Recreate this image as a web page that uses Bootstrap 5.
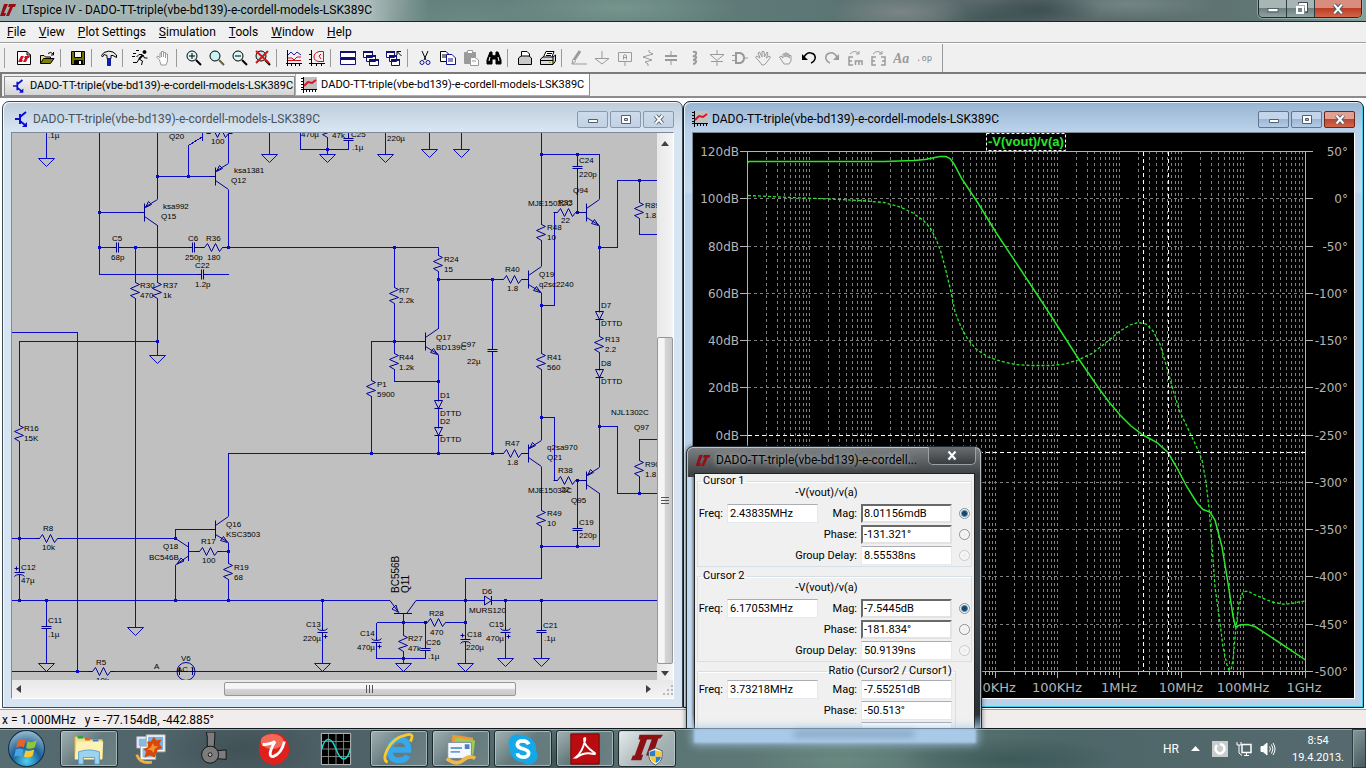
<!DOCTYPE html>
<html lang="en">
<head>
<meta charset="utf-8">
<meta name="viewport" content="width=device-width, initial-scale=1">
<title>LTspice IV - DADO-TT-triple(vbe-bd139)-e-cordell-models-LSK389C</title>
<link href="https://cdn.jsdelivr.net/npm/bootstrap@5.3.0/dist/css/bootstrap.min.css" rel="stylesheet">
<style>
  body { font: 12px/16px Roboto, "Open Sans", sans-serif; color: #000; background: #f0f0f0; }
  button { font: inherit; padding: 0; border: 0; background: none; color: inherit; }
  .fill { min-height: 0; }
  .aero { background:
      radial-gradient(ellipse 60px 20px at 1040px 10px, #2f4547aa, transparent),
      radial-gradient(ellipse 90px 16px at 1130px 4px, #7d9290aa, transparent),
      radial-gradient(ellipse 70px 20px at 900px 12px, #8b8f90aa, transparent),
      radial-gradient(ellipse 120px 24px at 620px 8px, #7fa095aa, transparent),
      radial-gradient(ellipse 90px 24px at 470px 20px, #6d8d88aa, transparent),
      radial-gradient(ellipse 60px 20px at 990px 18px, #37504faa, transparent),
      linear-gradient(90deg, #9dafb0, #a9bab8 370px, #64807c 430px, #64807c 45%, #5b7674 60%, #5c6669 75%, #5f7673 92%, #7fa19b); }
  .app-title { height: 22px; border-bottom: 1px solid #17262a; }
  .app-title h1 { font-size: 12px; line-height: 20px; padding: 0 12px 0 6px; text-shadow: 0 0 6px #c8d4d3; }
  .sysbtns { height: 18px; width: 104px; border: 1px solid #1d2c2f; border-top: 0; border-radius: 0 0 5px 5px; overflow: hidden; box-shadow: 0 0 0 1px #b9c9c788; }
  .sysbtns button { flex: 28; height: 100%; background: linear-gradient(#a7b5b4 45%, #6d807f 50%, #8fa3a1); border-right: 1px solid #2d3d40; }
  .sysbtns .shut { flex: 47; background: linear-gradient(#d98d7f 45%, #bc3c24 50%, #d4654a); border: 0; }
  .menu-row { height: 21px; border-bottom: 1px solid #a0a0a0; padding-left: 7px; gap: 13px; }
  .menu-row a { color: #000; text-decoration: none; }
  .tools { height: 31px; border-bottom: 2px solid #7a7a7a; border-top: 1px solid #fff; }
  .grip { width: 3px; height: 20px; margin: 0 7px 0 2px; border-right: 1px solid #a0a0a0; }
  .tgroup { border-right: 1px solid #9a9a9a; padding-right: 2px; margin-right: 5px; height: 18px; }
  .tgroup.fin { height: 28px; padding-right: 7px; }
  .tgroup button { width: 23px; height: 20px; display: flex; align-items: center; justify-content: center; }
  .tgroup svg { width: 16px; height: 16px; fill: none; stroke: #000; }
  .tgroup button:disabled svg { stroke: #9a9a9a; color: #9a9a9a; }
  .doc-tabs { height: 24px; padding-left: 2px; border-left: 2px solid #7a7a7a; border-bottom: 2px solid #8c8c8c; }
  .doc-tabs button { font-size: 11px; white-space: nowrap; border: 1px solid #8c8c8c; height: 20px; padding: 0 1px 0 8px; gap: 5px; background: linear-gradient(#f4f4f4, #d4d4d4); }
  .doc-tabs button.active { height: 22px; background: #fff; border-color: #b0b0b0; border-right-color: #8c8c8c; border-top: 0; padding: 0 5px; gap: 4px; }
  .mdi { background: #fff; padding: 3px 2px 1px; }
  .child { border: 1px solid #3c4a55; border-radius: 7px 7px 0 0; padding: 0 8px 8px; background: linear-gradient(#bfcddb, #d7e4f2 28px); color: #47535e; flex: 1 1 0; min-width: 0; box-shadow: inset 1px 1px 0 #f3f8fd; }
  .child.front { background: linear-gradient(#99b4d1, #b9d1ea 28px, #c5d9ee 90px, #b9d1ea 92px); color: #000; border-color: #101a22; box-shadow: inset 1px 1px 0 #e8f2fb, inset -1px -1px 0 #3bd0ea; }
  .child-title { height: 30px; padding-top: 4px; }
  .child-title h2 { font-size: 12px; line-height: 16px; margin: 0 auto 0 4px; }
  .winbtn { width: 31px; height: 17px; border: 1px solid #8a9aad; border-radius: 2px; margin-left: 2px; background: linear-gradient(#cddbea, #c2d2e4); }
  .front .winbtn { background: linear-gradient(#c3d5ea 45%, #9cb7d6 50%, #b4cbe5); border-color: #5f7690; }
  .front .winbtn.shut { background: linear-gradient(#e0a193 45%, #be4630 50%, #d1674c); border-color: #6b2418; }
  .client { border: 1px solid #7e8a95; border-right-color: #fff; border-bottom-color: #fff; min-height: 0; }
  .sheet { background: #c0c0c0; min-width: 0; min-height: 0; }
  .sheet svg, .plot svg { display: block; width: 100%; height: 100%; }
  .plot { background: #000; }
  .vbar { width: 16px; background: linear-gradient(90deg, #e8e8e8, #f4f4f4); color: #404040; }
  .hbar { height: 18px; background: linear-gradient(#e8e8e8, #f4f4f4); color: #404040; }
  .thumb { border: 1px solid #979797; border-radius: 2px; }
  .vbar .thumb { flex: 319; background: linear-gradient(90deg, #f5f5f5 45%, #d6d6d6 50%, #c9c9c9); }
  .vbar .lead-in { flex: 188; }
  .vbar .lead-out { flex: 7; }
  .hbar .thumb { flex: 291; background: linear-gradient(#f5f5f5 45%, #d6d6d6 50%, #c9c9c9); }
  .hbar .lead-in { flex: 204; }
  .hbar .lead-out { flex: 131; }
  .status { height: 19px; background: #f1eded; border-top: 1px solid #a5a0a0; padding-left: 2px; line-height: 20px; gap: 9px; }

  .sch { stroke: #0a0ac8; fill: none; shape-rendering: crispEdges; }
  .sch .dot { fill: #0a0ac8; stroke: none; }
  .parts { stroke: #000096; fill: none; }
  .lbl { font: 8px "Liberation Sans", Arial, sans-serif; fill: #000; }
  .lbl .big { font-size: 10px; }
  .axis { font: 12px "DejaVu Sans", sans-serif; fill: #b4b4b4; }
  .axis .hz { font-size: 13px; text-anchor: middle; }
  .axis .rt { text-anchor: end; }
  .gridln { stroke: #808080; stroke-dasharray: 3 3; fill: none; shape-rendering: crispEdges; }

  .readout { position: absolute; left: 686px; top: 446px; width: 296px; height: 320px; border: 1px solid #1e2a30; border-radius: 7px 7px 0 0; padding: 0 6px 0 7px; background: linear-gradient(90deg, #c5d9ee 4px, transparent 9px) 0 30px no-repeat, linear-gradient(#7e8284, #3c3f41 28px, #3e454b 45%, #2a3036 84%, #9cc4e8 90%); box-shadow: inset 0 0 0 1px #c9d6dfcc, 0 0 5px #0008; }
  .readout header { height: 26px; padding-left: 1px; }
  .readout h2 { font-size: 12px; line-height: 26px; margin: 0 0 0 5px; text-shadow: 0 0 5px #b4b8ba, 0 0 8px #b4b8ba; white-space: nowrap; }
  .readout .shutbtn { position: absolute; right: 5px; top: 0; width: 48px; height: 18px; border: 1px solid #9aa0a4; border-top: 0; border-radius: 0 0 5px 5px; background: linear-gradient(#6a6e70, #3a3d3f); }
  .pane { background: #f0f0f0; border: 1px solid #222; height: 300px; padding: 1px 2px 0; font-size: 11px; line-height: 12px; }
  .pane fieldset { border: 1px solid #d5dfe5; box-shadow: inset 0 1px 0 #fff; height: 92px; margin-bottom: 3px; padding: 0; }
  .pane legend { float: none; width: auto; font-size: 11px; line-height: 12px; margin: 0 0 0 3px; padding: 0 2px; white-space: nowrap; }
  .pane .trace { text-align: center; padding-right: 16px; height: 16px; line-height: 11px; margin: 0 0 1px; }
  .pane .quotient { margin-right: 16px; height: 110px; }
  .pane .quotient legend { margin: 0 0 3px 50%; }
  .duo { display: grid; grid-template-columns: 25px 91px 35px 91px 16px; column-gap: 4px; row-gap: 2px; align-items: center; }
  .duo label { text-align: right; white-space: nowrap; }
  .duo .wide { grid-column: 1 / 4; }
  .duo input[type=text] { width: 100%; height: 19px; border: 1px solid #e3e9ef; border-top-color: #abadb3; padding: 0 2px; font: inherit; background: #fff; color: #000; }
  .duo input.sunk { border: 2px solid #e3e3e3; border-top-color: #696969; border-left-color: #696969; padding: 0 1px; }
  .duo input[type=radio] { appearance: none; width: 11px; height: 11px; margin: 0 0 0 3px; border: 1px solid #8e8f8f; border-radius: 50%; background: radial-gradient(#e8ecef, #fff); }
  .duo input[type=radio]:checked { background: radial-gradient(#16476f 0 2px, #4a8fc0 3px, #f4f4f4 4px); }
  .duo input[type=radio]:disabled { border-color: #c8c8c8; }

  .taskbar { height: 40px; border-top: 1px solid #101a1e; box-shadow: inset 0 1px 0 #93aaab; z-index: 2; color: #fff; background:
      radial-gradient(ellipse 110px 22px at 1010px 30px, #33504faa, transparent),
      radial-gradient(ellipse 90px 24px at 840px 32px, #6e8f85aa, transparent),
      radial-gradient(ellipse 80px 30px at 560px 30px, #2f4445aa, transparent),
      radial-gradient(ellipse 80px 30px at 240px 20px, #3c4c50aa, transparent),
      linear-gradient(90deg, #566d72, #4a5c62 20%, #5a7274 45%, #5f7c76 62%, #4d6668 78%, #566a6f); }
  .underglow { position: absolute; left: 694px; top: 0; width: 282px; height: 14px; background: #a9c9e8; box-shadow: 0 0 8px 2px #a9c9e8cc; filter: blur(1px); }
  .underglow i { position: absolute; left: 100px; top: 2px; width: 120px; height: 6px; background: #86a5c2; filter: blur(3px); }
  .tb { width: 60px; height: 37px; margin-right: 2px; display: flex; align-items: center; justify-content: center; }
  .tb svg { width: 34px; height: 34px; }
  .tb.open { width: 58px; margin: 0 2px; border: 1px solid #1b2a2e; border-radius: 3px; box-shadow: inset 0 0 0 1px #c4d0d1aa; background: linear-gradient(135deg, #b6c4c4cc, #6f8488aa 50%, #7b9090aa); }
  .tb.open.cur { background: linear-gradient(135deg, #e7ebeb, #a7b3b5 60%, #98a6a8); }
  .startbtn { width: 52px; margin-right: 6px; }
  .startbtn svg { width: 37px; height: 37px; }
  .tray { gap: 8px; height: 39px; }
  .clock { font-size: 11px; line-height: 17px; width: 52px; text-align: center; white-space: nowrap; }
  .peek { width: 14px; height: 39px; border: 1px solid #2c3d42; box-shadow: inset 1px 1px 0 #8fa4a6; background: linear-gradient(135deg, #aebdbd88, #3a4d5288); }
</style>
</head>
<body class="vh-100 overflow-hidden">

<svg width="0" height="0" class="position-absolute" aria-hidden="true">
  <defs>
    <g id="rv"><path stroke="#c0c0c0" d="M0-8V8"/><path d="M0-9V-8L4-6 -5-2 4 2 -5 5 0 8V9"/></g>
    <g id="rh"><path stroke="#c0c0c0" d="M-9 0H9"/><path d="M-13 0H-9L-6-4-2 4 2-4 6 4 9 0H13"/></g>
    <g id="cv"><path stroke="#c0c0c0" d="M0-1V1"/><path d="M-5-1H5M-5 1H5M0-5V-1M0 1V5"/></g>
    <g id="ch"><path stroke="#c0c0c0" d="M-1 0H1"/><path d="M-1-5V5M1-5V5M-5 0H-1M1 0H5"/></g>
    <g id="cp"><path stroke="#c0c0c0" d="M0-1V1"/><path d="M-5 1H5M-5-3Q-4-1 0-1T5-3M0-5V-1M0 1V5M1 5H5M3 3V7"/></g>
    <g id="cq"><path stroke="#c0c0c0" d="M0-1V1"/><path d="M-5-1H5M-5 3Q-4 1 0 1T5 3M0-5V-1M0 1V5M-5-5H-1M-3-7V-3"/></g>
    <g id="gn"><path stroke="#0a0ac8" d="M-8 0H8L0 8Z"/></g>
    <g id="np"><path d="M0-9V9M0-4L13-13M0 5L13 13M-6 0H0M12 13L5 11 8 7Z"/></g>
    <g id="pn"><path d="M0-9V9M0-5L13-13M0 4L13 13M-6 0H0M1-5L4-11 7-8Z"/></g>
    <g id="dv"><path stroke="#c0c0c0" d="M0-3V3"/><path d="M-4-4H4L0 4ZM-4 4H4"/></g>
    <g id="dec"><path d="M19 0V520M30 0V520M37 0V520M43 0V520M48 0V520M52 0V520M56 0V520M59 0V520M62 0V520"/></g>
    <g id="tick"><path d="M0 0V7M19 0V4M30 0V4M37 0V4M43 0V4M48 0V4M52 0V4M56 0V4M59 0V4"/></g>
    <symbol id="ltlogo" viewBox="0 0 16 12"><path fill="#980c14" stroke="none" d="M4 0H8L4 9H6L5 12H0L1 9ZM9 0H16L15 3H13L9 12H6L10 3H8Z"/></symbol>
    <symbol id="schic" viewBox="0 0 14 16"><path fill="none" stroke="#0a0ad8" stroke-width="2" d="M0 8H5M5 3V13M5 6L11 1M5 10L10 14"/><path fill="#0a0ad8" d="M12 16H7L12 11Z"/></symbol>
    <symbol id="plotic" viewBox="0 0 16 16"><path fill="#c0c0c0" d="M2 0H16V12H2Z"/><path fill="none" stroke="#000" d="M2.500 0V16M0 12.500H16M5.500 12V15M8.500 12V15M11.500 12V15M14.500 12V15M0 1.500H2M0 4.500H2M0 7.500H2M0 10.500H2"/><path fill="none" stroke="#e01020" stroke-width="2" d="M3 9L7 5 11 6 15 3"/></symbol>
    <symbol id="gmin" viewBox="0 0 14 11"><path fill="#fff" stroke="#53606c" d="M2.500 5.500H11.500V8.500H2.500Z"/></symbol>
    <symbol id="gmax" viewBox="0 0 14 11"><path fill="#fff" fill-rule="evenodd" stroke="#53606c" d="M2.500 1.500H11.500V9.500H2.500ZM5.500 4.500H8.500V6.500H5.500Z"/></symbol>
    <symbol id="gx" viewBox="0 0 14 11"><path fill="none" stroke="#53606c" stroke-width="4" d="M3.500 1.500L10.500 9.500M10.500 1.500L3.500 9.500"/><path fill="none" stroke="#fff" stroke-width="2" d="M3.500 1.500L10.500 9.500M10.500 1.500L3.500 9.500"/></symbol>
  </defs>
</svg>

<div class="d-flex flex-column h-100">
  <div class="fill position-relative overflow-hidden d-flex flex-column flex-grow-1">
    <header class="app-title aero d-flex align-items-start flex-shrink-0">
      <svg class="mt-1 ms-0 flex-shrink-0" width="16" height="12"><use href="#ltlogo"/></svg>
      <h1 class="m-0 me-auto fw-normal">LTspice IV - DADO-TT-triple(vbe-bd139)-e-cordell-models-LSK389C</h1>
      <div class="sysbtns d-flex me-1">
        <button aria-label="Minimize"><svg class="d-block mx-auto" width="16" height="13"><use href="#gmin"/></svg></button>
        <button aria-label="Restore"><svg class="d-block mx-auto" width="14" height="14" fill="none" stroke="#fff" stroke-width="2"><path stroke="#445" stroke-width="1" d="M4.500 2V.500H13.500V10.500H11.500"/><path d="M5 2H12V9"/><path d="M3 5H9V11H3Z"/></svg></button>
        <button class="shut" aria-label="Close"><svg class="d-block mx-auto" width="16" height="12"><use href="#gx"/></svg></button>
      </div>
    </header>

    <nav class="menu-row d-flex align-items-center flex-shrink-0" aria-label="Main menu">
      <a href="#"><u>F</u>ile</a><a href="#"><u>V</u>iew</a><a href="#"><u>P</u>lot Settings</a><a href="#"><u>S</u>imulation</a><a href="#"><u>T</u>ools</a><a href="#"><u>W</u>indow</a><a href="#"><u>H</u>elp</a>
    </nav>

    <div class="tools d-flex align-items-center flex-shrink-0" role="toolbar" aria-label="Tools">
      <div class="grip"></div>
      <div class="tgroup d-flex align-items-center">
        <button aria-label="New schematic"><svg viewBox="0 0 16 16"><path fill="#fff" d="M1.500 1.500H11L14.500 5V14.500H1.500ZM11 1.500V5H14.500"/><path fill="#d01020" stroke="none" d="M5 6H8L6 10H7L6 12H2L3 10ZM9 6H14L13 8H12L10 12H7L9 8H8Z"/></svg></button>
        <button aria-label="Open"><svg viewBox="0 0 16 16"><path fill="#e8e070" d="M1.500 13.500V5.500H5L6.500 7H11.500V9"/><path fill="#808000" d="M1.500 13.500L4.500 8.500H15L11.500 13.500Z"/><path d="M9 3.500Q12 1 14 4M14.500 2V5H12"/></svg></button>
      </div>
      <div class="tgroup d-flex align-items-center">
        <button aria-label="Save"><svg viewBox="0 0 16 16"><path fill="#707000" d="M1.500 1.500H14.500V14.500H1.500Z"/><path fill="#f4f4f4" d="M4.500 1.500H11.500V7.500H4.500Z"/><path fill="#000" d="M4.500 10.500H12.500V14.500H4.500Z"/><path fill="#fff" stroke="none" d="M9 11H11V14H9Z"/></svg></button>
      </div>
      <div class="tgroup d-flex align-items-center">
        <button aria-label="Control panel"><svg viewBox="0 0 16 16"><path fill="#e8e8e8" d="M.500 5.500L3 2.500Q8 0 12 2L15.500 5V7.500L12 5.500H10V8.500H6V5.500L3 4.500 1.500 7Z"/><path fill="#1020c0" stroke="#101890" d="M6.500 8.500H9.500V15.500H6.500Z"/></svg></button>
      </div>
      <div class="tgroup d-flex align-items-center">
        <button aria-label="Run"><svg viewBox="0 0 16 16"><circle cx="12.500" cy="2" r="1.500" fill="#000"/><path stroke-width="2" d="M11 5L7 9"/><path d="M7 9L10.500 11 9.500 15M7 9L5 12.500H1M11 5L12.500 8H15.500M10 4.500H7L4.500 7M1 3.500H4M0 6.500H3M4 .500H7"/></svg></button>
        <button aria-label="Halt" disabled><svg viewBox="0 0 16 16"><path fill="#fff" d="M4.500 10L1.500 7 3 6 5 8V3H6.500V7 1.500H8.500V7 2.500H10.500V8 4H12.500V11L11 15H6Z"/></svg></button>
      </div>
      <div class="tgroup d-flex align-items-center">
        <button aria-label="Zoom in"><svg viewBox="0 0 16 16"><circle cx="6" cy="6" r="5" fill="#d8f8f8"/><path d="M3 6H9M6 3V9"/><path stroke-width="2" d="M10 10L15 15"/></svg></button>
        <button aria-label="Pan"><svg viewBox="0 0 16 16"><circle cx="6" cy="6" r="5" fill="#c8f4f4"/><path stroke="#606038" stroke-width="2" d="M10 10L15 15"/></svg></button>
        <button aria-label="Zoom out"><svg viewBox="0 0 16 16"><circle cx="6" cy="6" r="5" fill="#d8f8f8"/><path d="M3 6H9"/><path stroke-width="2" d="M10 10L15 15"/></svg></button>
        <button aria-label="Zoom to fit"><svg viewBox="0 0 16 16"><circle cx="6" cy="6" r="5" fill="#b8f0f0"/><path stroke-width="2" d="M10 10L15 15"/><path stroke="#e01010" stroke-width="2" d="M1 1L14 13M13 1L1 13"/></svg></button>
      </div>
      <div class="tgroup d-flex align-items-center">
        <button aria-label="Autorange"><svg viewBox="0 0 16 16"><path d="M1.500 0V16M0 13.500H16M5.500 13V16M9.500 13V16M13.500 13V16"/><path stroke="#2020a0" d="M2 5L5 2 8 5 11 2 15 5"/><path stroke="#d01020" d="M2 8H6L8 10 11 7H15M2 10.500H15"/></svg></button>
        <button aria-label="Plot limits"><svg viewBox="0 0 16 16"><path d="M2.500 0V16M0 13.500H16M0 4.500H3M0 9.500H3M7.500 13V16M12.500 13V16"/><path stroke="#d01020" d="M14.500 1.500H10Q5 3 5 7T10 11.500H14.500M14.500 1.500V12M12 4L10 6 12 9"/></svg></button>
      </div>
      <div class="tgroup d-flex align-items-center">
        <button aria-label="Tile windows"><svg viewBox="0 0 16 16"><path fill="#fff" stroke="#101070" d="M.500 1.500H15.500V7.500H.500ZM.500 8.500H15.500V14.500H.500Z"/><path stroke="#101070" stroke-width="2" d="M0 2H16M0 9H16"/></svg></button>
        <button aria-label="Cascade windows"><svg viewBox="0 0 16 16"><g fill="#fff" stroke="#101070"><path d="M.500 1.500H9.500V7.500H.500ZM3.500 5.500H12.500V11.500H3.500ZM6.500 9.500H15.500V15.500H6.500Z"/><path stroke-width="2" d="M0 2H10M3 6H13M6 10H16"/></g></svg></button>
        <button aria-label="Close all"><svg viewBox="0 0 16 16"><g fill="#fff" stroke="#101070"><path d="M.500 1.500H8.500V7.500H.500ZM3.500 5.500H10.500V11.500H3.500ZM5.500 9.500H13.500V15.500H5.500Z"/><path stroke-width="2" d="M0 2H9M3 6H11M5 10H14"/></g><path d="M15.500 6L11 1.500M11 5V1.500H15"/></svg></button>
      </div>
      <div class="tgroup d-flex align-items-center">
        <button aria-label="Cut"><svg viewBox="0 0 16 16"><path d="M5 1L9 10M11 1L7 10"/><g stroke="#101090"><circle cx="5" cy="12.500" r="2"/><circle cx="11" cy="12.500" r="2"/></g></svg></button>
        <button aria-label="Copy"><svg viewBox="0 0 16 16"><path fill="#fff" d="M.500 1.500H6L8.500 4V11.500H.500ZM2 5H6M2 7H6"/><path fill="#fff" stroke="#101090" d="M6.500 4.500H12L15.500 8V14.500H6.500ZM8 9H13M8 11H13"/></svg></button>
        <button aria-label="Paste" disabled><svg viewBox="0 0 16 16"><path fill="#9a9a9a" d="M1.500 2.500H12.500V13.500H1.500Z"/><path fill="#fff" d="M4.500.500H9.500V3.500H4.500ZM7.500 7.500H12L15.500 10V15.500H7.500ZM9 11H13"/></svg></button>
        <button aria-label="Find"><svg viewBox="0 0 16 16"><path fill="#000" d="M4 2H6V5L8 6 10 5V2H12L15 10V14H10V9H6V14H1V10Z"/><path stroke="#fff" d="M4 7L3 11M12 7L13 11"/></svg></button>
      </div>
      <div class="tgroup d-flex align-items-center">
        <button aria-label="Print preview"><svg viewBox="0 0 16 16"><path fill="#fff" d="M4.500 6V1.500H10L12.500 4V6"/><path fill="#c8c8c8" d="M1.500 8L4 6H12L14.500 8V14.500H1.500Z"/></svg></button>
        <button aria-label="Print"><svg viewBox="0 0 16 16"><path fill="#fff" d="M3.500 7L6 1.500H14L12 7"/><path fill="#d8d8d8" d="M.500 9L3 7H13L15.500 5V11L13 14.500H.500ZM0 10.500H13M13 7V14"/><path d="M7 3.500H12M6 5.500H11"/><path stroke="#c0b000" d="M9 12.500H11"/></svg></button>
      </div>
      <div class="tgroup fin d-flex align-items-center">
        <button aria-label="Wire" disabled><svg viewBox="0 0 16 16"><path stroke-width="3" d="M9 1L3 10"/><path d="M2 9L1 14H16M1 14L5 11"/></svg></button>
        <button aria-label="Ground" disabled><svg viewBox="0 0 16 16"><path d="M8 1V8M1 8.500H15L8 14Z"/></svg></button>
        <button aria-label="Label net" disabled><svg viewBox="0 0 16 16"><path d="M1.500 2.500H14.500V11.500H1.500ZM8 12V16M6.500 9.500V5.500L8 4.500 9.500 5.500V9.500M6 7.500H10"/></svg></button>
        <button aria-label="Resistor" disabled><svg viewBox="0 0 16 16"><path d="M9 0V2L13 4 3 7 12 10 5 12 8 14V16"/></svg></button>
        <button aria-label="Capacitor" disabled><svg viewBox="0 0 16 16"><path stroke-width="2" d="M2 6H14M2 10H14"/><path d="M8 1V6M8 10V15"/></svg></button>
        <button aria-label="Inductor" disabled><svg viewBox="0 0 16 16"><path stroke-width="2" d="M7 2Q11 1 10 4T7 6Q11 6 10 8T7 10Q11 10 10 12T7 14"/></svg></button>
        <button aria-label="Diode" disabled><svg viewBox="0 0 16 16"><path d="M8 0V4M1 4.500H15L8 10.500ZM2 11.500H14M8 11V16"/></svg></button>
        <button aria-label="Component" disabled><svg viewBox="0 0 16 16"><path stroke-width="2" d="M4 3H8Q12 4 12 8T8 13H4Z"/><path d="M0 5.500H4M0 10.500H4M12 8H16"/></svg></button>
        <button aria-label="Move" disabled><svg viewBox="0 0 16 16"><path d="M4 11L.500 7 2 6 5 8 3 3 4.500 2 7 7 7 1.500H9L9.500 7 12 2 13 3 11.500 8 14 6 15.500 7 12 12 9 15H7Z"/></svg></button>
        <button aria-label="Drag" disabled><svg viewBox="0 0 16 16"><path d="M4 11L1.500 7 3 6 5 8V4H7V7 3H9V7 4H11V8 5.500H13V11L11 14H6Z"/></svg></button>
        <button aria-label="Undo"><svg viewBox="0 0 16 16"><path stroke-width="1.500" d="M3 7Q6 2 10 3Q15 4 14 9Q13 12 10 13"/><path fill="#000" stroke="none" d="M1 4V10H7Z"/></svg></button>
        <button aria-label="Redo" disabled><svg viewBox="0 0 16 16"><path stroke-width="1.500" d="M13 7Q10 2 6 3Q1 4 2 9Q3 12 6 13"/><path fill="#9a9a9a" stroke="none" d="M15 4V10H9Z"/></svg></button>
        <button aria-label="Rotate" disabled><svg viewBox="0 0 16 16"><path d="M3 4Q8-1 12 4M12 1V4H9"/><path stroke-width="1.500" d="M6 7H2V15H6M2 11H5M8.500 15V11H15V15M12 11V15"/></svg></button>
        <button aria-label="Mirror" disabled><svg viewBox="0 0 16 16"><path d="M3 4Q8-1 12 4M12 1V4H9"/><path stroke-width="1.500" d="M6 7H2V15H6M2 11H5M11 7H15V15H11M12 11H15"/></svg></button>
        <button aria-label="Text" disabled><svg viewBox="0 0 16 16"><text x="0" y="13" font-family="Liberation Serif, serif" font-style="italic" font-size="14" font-weight="bold" fill="#9a9a9a" stroke="none">Aa</text></svg></button>
        <button aria-label="SPICE directive" disabled><svg viewBox="0 0 16 16"><text x="0" y="11" font-family="DejaVu Sans Mono, monospace" font-size="9" fill="#8a8a8a" stroke="none">.op</text></svg></button>
      </div>
    </div>

    <div class="doc-tabs d-flex flex-shrink-0" role="tablist">
      <button role="tab" class="d-flex align-items-center align-self-end"><svg width="12" height="14"><use href="#schic"/></svg>DADO-TT-triple(vbe-bd139)-e-cordell-models-LSK389C</button>
      <button role="tab" class="active d-flex align-items-center" aria-selected="true"><svg width="16" height="16"><use href="#plotic"/></svg>DADO-TT-triple(vbe-bd139)-e-cordell-models-LSK389C</button>
    </div>

    <main class="mdi fill d-flex flex-grow-1">
      <section class="child d-flex flex-column">
        <div class="child-title d-flex align-items-center">
          <svg class="ms-1" width="14" height="16"><use href="#schic"/></svg>
          <h2 class="fw-normal ms-1">DADO-TT-triple(vbe-bd139)-e-cordell-models-LSK389C</h2>
          <button class="winbtn" aria-label="Minimize"><svg class="d-block mx-auto" width="14" height="11"><use href="#gmin"/></svg></button>
          <button class="winbtn" aria-label="Maximize"><svg class="d-block mx-auto" width="14" height="11"><use href="#gmax"/></svg></button>
          <button class="winbtn" aria-label="Close"><svg class="d-block mx-auto" width="14" height="11"><use href="#gx"/></svg></button>
        </div>
        <div class="client d-flex flex-column flex-grow-1">
          <div class="fill d-flex flex-grow-1">
            <div class="sheet flex-grow-1">
              <svg viewBox="12 133 645 547" preserveAspectRatio="xMinYMin meet" role="img" aria-label="Amplifier schematic">
                <g class="sch">
                  <path d="M46.500 133V158M99.500 133V274.500H228.500M99.500 212.500H144M157.500 133V199M157.500 225V355M157.500 176.500H215M188.500 176.500V145.500L202 137M202.500 133V141M228.500 133V163M228.500 190V247.500M99.500 247.500H438.500V329M135.500 247.500V627M12 332.500H77.500V671.500M157.500 341.500H19.500V600M269.500 133V154M300.500 133V149.500H348.500V133M327.500 133V154M385.500 133V154M429.500 133V150M461.500 133V150"/>
                  <path d="M541.500 133V266M541.500 154.500H599.500V199M577.500 154.500V212.500M541.500 305.500H554.500V212.500H586M599.500 226V467M599.500 247.500H617.500V180.500H657M639.500 180.500V234.500H657M599.500 426.500H617.500V493.500H657M657 439.500H639.500V493.500M541.500 293V440M438.500 279.500H528M492.500 279.500V453.500M394.500 247.500V381.500H438.500M425 341.500H371.500V453.500M438.500 355V453.500M228.500 516V453.500H528M541.500 417.500H554.500V480.500H586M577.500 480.500V546.500M599.500 493V546.500H541.500M541.500 467V578.500H465.500V663"/>
                  <path d="M12 600.500H390M416 600.500H657M403.500 613V663M376.500 622.500H465.500M376.500 622.500V658.500H425.500V622.500M505.500 600V658M541.500 600V658M12 671.500H657M12 538.500H175.500V529.500H215M228.500 543V600M175.500 565V600M188.500 551.500H228.500M46.500 600V663M322.500 600V663"/>
                  <path class="dot" d="M98 211h3v3h-3zM98 246h3v3h-3zM134 246h3v3h-3zM156 175h3v3h-3zM187 175h3v3h-3zM227 246h3v3h-3zM156 340h3v3h-3zM326 148h3v3h-3zM540 153h3v3h-3zM576 153h3v3h-3zM576 211h3v3h-3zM598 246h3v3h-3zM638 179h3v3h-3zM393 246h3v3h-3zM437 278h3v3h-3zM491 278h3v3h-3zM540 304h3v3h-3zM393 340h3v3h-3zM437 380h3v3h-3zM370 452h3v3h-3zM437 452h3v3h-3zM491 452h3v3h-3zM540 416h3v3h-3zM598 425h3v3h-3zM576 479h3v3h-3zM638 492h3v3h-3zM540 545h3v3h-3zM576 545h3v3h-3zM464 599h3v3h-3zM504 599h3v3h-3zM540 599h3v3h-3zM402 621h3v3h-3zM424 621h3v3h-3zM464 621h3v3h-3zM402 657h3v3h-3zM321 599h3v3h-3zM227 599h3v3h-3zM174 599h3v3h-3zM18 599h3v3h-3zM45 599h3v3h-3zM18 537h3v3h-3zM174 537h3v3h-3zM227 550h3v3h-3zM76 670h3v3h-3z"/>
                </g>
                <g class="parts">
                  <use href="#gn" x="46.500" y="158.500"/><use href="#gn" x="157.500" y="355.500"/><use href="#gn" x="135.500" y="627.500"/><use href="#gn" x="269.500" y="154.500"/><use href="#gn" x="327.500" y="154.500"/><use href="#gn" x="385.500" y="154.500"/><use href="#gn" x="429.500" y="149.500"/><use href="#gn" x="461.500" y="149.500"/><use href="#gn" x="403.500" y="663.500"/><use href="#gn" x="465.500" y="663.500"/><use href="#gn" x="505.500" y="658.500"/><use href="#gn" x="541.500" y="658.500"/><use href="#gn" x="46.500" y="663.500"/><use href="#gn" x="322.500" y="663.500"/>
                  <use href="#rv" x="135.500" y="290.500"/><use href="#rv" x="157.500" y="290.500"/><use href="#rv" x="19.500" y="433.500"/><use href="#rv" x="327.500" y="129.500"/><use href="#rv" x="541.500" y="232.500"/><use href="#rv" x="639.500" y="210.500"/><use href="#rv" x="599.500" y="344.500"/><use href="#rv" x="639.500" y="468.500"/><use href="#rv" x="438.500" y="263.500"/><use href="#rv" x="394.500" y="295.500"/><use href="#rv" x="394.500" y="361.500"/><use href="#rv" x="371.500" y="388.500"/><use href="#rv" x="541.500" y="361.500"/><use href="#rv" x="541.500" y="518.500"/><use href="#rv" x="403.500" y="643.500"/><use href="#rv" x="228.500" y="571.500"/>
                  <use href="#rh" x="213.500" y="247.500"/><use href="#rh" x="219.500" y="133.500"/><use href="#rh" x="566.500" y="212.500"/><use href="#rh" x="512.500" y="279.500"/><use href="#rh" x="512.500" y="453.500"/><use href="#rh" x="566.500" y="480.500"/><use href="#rh" x="436.500" y="622.500"/><use href="#rh" x="48.500" y="538.500"/><use href="#rh" x="208.500" y="551.500"/><use href="#rh" x="101.500" y="671.500"/>
                  <use href="#ch" x="117.500" y="247.500"/><use href="#ch" x="193.500" y="247.500"/><use href="#ch" x="202.500" y="274.500"/>
                  <use href="#cv" x="348.500" y="139.500"/><use href="#cv" x="577.500" y="167.500"/><use href="#cv" x="492.500" y="350.500"/><use href="#cv" x="577.500" y="529.500"/><use href="#cv" x="425.500" y="649.500"/><use href="#cv" x="541.500" y="631.500"/><use href="#cv" x="46.500" y="627.500"/>
                  <use href="#cp" x="376.500" y="641.500"/><use href="#cp" x="505.500" y="631.500"/><use href="#cp" x="322.500" y="631.500"/><use href="#cq" x="465.500" y="640.500"/><use href="#cq" x="19.500" y="573.500"/>
                  <use href="#pn" x="144.500" y="212.500"/><use href="#pn" x="215.500" y="176.500"/><use href="#pn" x="528.500" y="453.500"/><use href="#pn" x="586.500" y="480.500"/>
                  <use href="#np" x="586.500" y="212.500"/><use href="#np" x="528.500" y="279.500"/><use href="#np" x="425.500" y="341.500"/><use href="#np" x="215.500" y="529.500"/>
                  <path d="M188.500 542V561M188.500 547L175.500 538.500M188.500 556L175.500 565M177 564L181 558 184 561ZM390 600.500L399 613M416 600.500L407 613M394 613.500H412M398 612L392 609 396 605Z"/>
                  <use href="#dv" x="599.500" y="315.500"/><use href="#dv" x="599.500" y="373.500"/><use href="#dv" x="438.500" y="404.500"/><use href="#dv" x="438.500" y="431.500"/>
                  <path stroke="#c0c0c0" d="M485 600.500H491"/><path d="M484.500 596V605L491.500 600.500ZM491.500 596V605"/>
                  <circle cx="186" cy="671.500" r="9"/><path d="M179.500 668V675M192.500 668V675"/>
                </g>
                <g class="lbl">
                  <text x="48" y="138">.1µ</text><text x="169" y="139">Q20</text><text x="211" y="144">100</text><text x="234" y="173">ksa1381</text><text x="231" y="183">Q12</text><text x="163" y="209">ksa992</text><text x="161" y="219">Q15</text><text x="112" y="241">C5</text><text x="111" y="260">68p</text><text x="188" y="241">C6</text><text x="185" y="260">250p</text><text x="206" y="241">R36</text><text x="207" y="260">180</text><text x="195" y="268">C22</text><text x="195" y="287">1.2p</text><text x="140" y="288">R30</text><text x="140" y="298">470</text><text x="163" y="288">R37</text><text x="163" y="298">1k</text><text x="301" y="137">470µ</text><text x="332" y="138">47k</text><text x="351" y="137">C25</text><text x="352" y="150">.1µ</text><text x="387" y="141">220µ</text>
                  <text x="579" y="163">C24</text><text x="579" y="177">220p</text><text x="573" y="193">Q94</text><text x="528" y="206">MJE15032C</text><text x="558" y="205">R33</text><text x="561" y="223">22</text><text x="547" y="230">R48</text><text x="547" y="240">10</text><text x="645" y="208">R89</text><text x="645" y="218">1.8</text><text x="444" y="262">R24</text><text x="444" y="272">15</text><text x="505" y="272">R40</text><text x="507" y="291">1.8</text><text x="539" y="277">Q19</text><text x="539" y="287">q2sc2240</text><text x="399" y="293">R7</text><text x="399" y="303">2.2k</text><text x="601" y="308">D7</text><text x="601" y="326">DTTD</text><text x="605" y="342">R13</text><text x="605" y="352">2.2</text><text x="601" y="366">D8</text><text x="601" y="384">DTTD</text><text x="436" y="340">Q17</text><text x="436" y="350">BD139C</text><text x="461" y="347">C97</text><text x="467" y="364">22µ</text><text x="399" y="360">R44</text><text x="399" y="370">1.2k</text><text x="547" y="360">R41</text><text x="547" y="370">560</text><text x="377" y="387">P1</text><text x="377" y="397">5900</text><text x="440" y="398">D1</text><text x="440" y="416">DTTD</text><text x="440" y="424">D2</text><text x="440" y="442">DTTD</text><text x="611" y="415">NJL1302C</text><text x="634" y="430">Q97</text>
                  <text x="505" y="446">R47</text><text x="507" y="465">1.8</text><text x="547" y="450">q2sa970</text><text x="547" y="460">Q21</text><text x="558" y="473">R38</text><text x="528" y="493">MJE15033C</text><text x="561" y="492">22</text><text x="571" y="503">Q95</text><text x="645" y="467">R90</text><text x="645" y="477">1.8</text><text x="547" y="516">R49</text><text x="547" y="526">10</text><text x="579" y="525">C19</text><text x="579" y="538">220p</text>
                  <text class="big" transform="translate(399 593) rotate(-90)">BC556B</text><text class="big" transform="translate(409 593) rotate(-90)">Q11</text>
                  <text x="482" y="594">D6</text><text x="469" y="613">MURS120</text><text x="429" y="616">R28</text><text x="430" y="635">470</text><text x="360" y="636">C14</text><text x="357" y="650">470µ</text><text x="408" y="641">R27</text><text x="408" y="651">47k</text><text x="426" y="645">C26</text><text x="428" y="659">.1µ</text><text x="467" y="637">C18</text><text x="466" y="650">220µ</text><text x="489" y="627">C15</text><text x="486" y="641">470µ</text><text x="543" y="628">C21</text><text x="544" y="641">.1µ</text><text x="24" y="431">R16</text><text x="24" y="441">15K</text><text x="43" y="531">R8</text><text x="42" y="550">10k</text><text x="21" y="570">C12</text><text x="21" y="583">47µ</text><text x="163" y="549">Q18</text><text x="149" y="560">BC546B</text><text x="201" y="544">R17</text><text x="202" y="563">100</text><text x="226" y="527">Q16</text><text x="226" y="537">KSC3503</text><text x="234" y="570">R19</text><text x="234" y="580">68</text><text x="48" y="623">C11</text><text x="48" y="637">.1µ</text><text x="306" y="627">C13</text><text x="303" y="641">220µ</text><text x="96" y="665">R5</text><text x="96" y="683">10k</text><text x="154" y="669">A</text><text x="181" y="661">V6</text><text x="177" y="672">AC 1</text>
                </g>
              </svg>
            </div>
            <div class="vbar d-flex flex-column align-items-center flex-shrink-0">
              <svg width="8" height="5" class="mt-2"><path fill="currentColor" d="M4 0L8 5H0Z"/></svg>
              <div class="lead-in"></div>
              <div class="thumb w-100 d-flex align-items-center justify-content-center"><svg width="8" height="8" stroke="#555"><path d="M0 .500H8M0 3.500H8M0 6.500H8"/></svg></div>
              <div class="lead-out"></div>
              <svg width="8" height="5" class="mb-1"><path fill="currentColor" d="M4 5L8 0H0Z"/></svg>
            </div>
          </div>
          <div class="hbar d-flex align-items-center flex-shrink-0">
            <svg width="5" height="8" class="ms-1"><path fill="currentColor" d="M0 4L5 0V8Z"/></svg>
            <div class="lead-in"></div>
            <div class="thumb h-75 d-flex align-items-center justify-content-center"><svg width="8" height="8" stroke="#555"><path d="M.500 0V8M3.500 0V8M6.500 0V8"/></svg></div>
            <div class="lead-out"></div>
            <svg width="5" height="8" class="me-2"><path fill="currentColor" d="M5 4L0 0V8Z"/></svg>
            <svg width="10" height="12" class="ms-1" fill="#b8b8b8"><path d="M8 2h2v2h-2zM4 6h2v2h-2zM8 6h2v2h-2zM0 10h2v2h-2zM4 10h2v2h-2zM8 10h2v2h-2z"/></svg>
          </div>
        </div>
      </section>

      <section class="child front d-flex flex-column">
        <div class="child-title d-flex align-items-center">
          <svg class="ms-0" width="16" height="16"><use href="#plotic"/></svg>
          <h2 class="fw-normal">DADO-TT-triple(vbe-bd139)-e-cordell-models-LSK389C</h2>
          <button class="winbtn" aria-label="Minimize"><svg class="d-block mx-auto" width="14" height="11"><use href="#gmin"/></svg></button>
          <button class="winbtn" aria-label="Maximize"><svg class="d-block mx-auto" width="14" height="11"><use href="#gmax"/></svg></button>
          <button class="winbtn shut" aria-label="Close"><svg class="d-block mx-auto" width="14" height="11"><use href="#gx"/></svg></button>
        </div>
        <div class="client plot flex-grow-1">
          <svg viewBox="693 133 661 565" preserveAspectRatio="xMinYMin meet" role="img" aria-label="Loop gain magnitude and phase">
            <g class="gridln">
              <use href="#dec" x="747.500" y="151"/><use href="#dec" x="809.500" y="151"/><use href="#dec" x="871.500" y="151"/><use href="#dec" x="933.500" y="151"/><use href="#dec" x="995.500" y="151"/><use href="#dec" x="1057.500" y="151"/><use href="#dec" x="1119.500" y="151"/><use href="#dec" x="1181.500" y="151"/><use href="#dec" x="1243.500" y="151"/>
              <path d="M748 198.500H1305M748 246.500H1305M748 293.500H1305M748 340.500H1305M748 387.500H1305M748 482.500H1305M748 529.500H1305M748 576.500H1305M748 624.500H1305"/>
            </g>
            <path fill="none" stroke="#b4b4b4" shape-rendering="crispEdges" d="M740 151.500H1313M740 671.500H1313M747.500 151V671M1305.500 151V678M740 198.500H747M740 246.500H747M740 293.500H747M740 340.500H747M740 387.500H747M740 435.500H747M1305 198.500H1313M1305 246.500H1313M1305 293.500H1313M1305 340.500H1313M1305 387.500H1313M1305 435.500H1313M1305 482.500H1313M1305 529.500H1313M1305 576.500H1313M1305 624.500H1313"/>
            <g stroke="#b4b4b4" shape-rendering="crispEdges"><use href="#tick" x="933.500" y="671"/><use href="#tick" x="995.500" y="671"/><use href="#tick" x="1057.500" y="671"/><use href="#tick" x="1119.500" y="671"/><use href="#tick" x="1181.500" y="671"/><use href="#tick" x="1243.500" y="671"/></g>
            <path fill="none" stroke="#28e628" stroke-width="1.300" stroke-dasharray="3 2" d="M748 195.500L790 197.500 830 199 860 200.500 884 202.500 900 207 913 213 924 221 931 229 936 239 941 252 946 271 951 292 955 312 961 327 967 338 976 349 988 357 1000 361 1015 364.500 1030 365.500H1050L1065 364 1078 360 1093 353 1108 341 1120 331 1130 325 1138 322.500 1146 324 1153 331 1160 344 1167 368 1173 390 1180 412 1192 437 1198 450 1202 460 1206 482 1209 508 1212 545 1215 587 1220 623 1223 647 1227 665 1229 670H1231L1233 660 1236 627 1239 603 1243 592 1248 591 1253 594 1272 602 1285 604.500 1305 601"/>
            <path fill="none" stroke="#28e628" stroke-width="1.500" d="M747.500 163L749 161.500H884L914 160.500 925 159.500 935 157.500 940 156.500H946L950 158.500 954 164 962 179 978 203 995.700 232 1044 305 1078 358 1100 390 1109 402 1120 415 1131 426 1143 435 1157 442.500 1168 452.500 1177 468 1187 487 1197 503 1203 509.500 1210 512 1215 520 1222 547 1228 583 1233 616 1235.500 627 1240 625 1247 624.500 1255 626.500 1280 643 1305.500 660"/>
            <path fill="none" stroke="#fff" stroke-dasharray="4 3" shape-rendering="crispEdges" d="M1143.500 152V671M1168.500 152V671M748 435.500H1305M748 452.500H1305"/>
            <g class="axis">
              <g class="rt"><text x="739" y="156">120dB</text><text x="739" y="203">100dB</text><text x="739" y="251">80dB</text><text x="739" y="298">60dB</text><text x="739" y="345">40dB</text><text x="739" y="392">20dB</text><text x="739" y="440">0dB</text>
              <text x="1348" y="156">50°</text><text x="1348" y="203">0°</text><text x="1348" y="251">-50°</text><text x="1348" y="298">-100°</text><text x="1348" y="345">-150°</text><text x="1348" y="392">-200°</text><text x="1348" y="440">-250°</text><text x="1348" y="487">-300°</text><text x="1348" y="534">-350°</text><text x="1348" y="581">-400°</text><text x="1348" y="629">-450°</text><text x="1348" y="676">-500°</text></g>
              <g class="hz"><text x="995" y="692">10KHz</text><text x="1057" y="692">100KHz</text><text x="1119" y="692">1MHz</text><text x="1181" y="692">10MHz</text><text x="1243" y="692">100MHz</text><text x="1304" y="692">1GHz</text></g>
            </g>
            <rect x="986.500" y="133.500" width="79" height="17" fill="#000" stroke="#fff" stroke-dasharray="3 2"/>
            <text x="988" y="146" font-family="Liberation Sans, Arial, sans-serif" font-weight="bold" font-size="13" fill="#28e628">-V(vout)/v(a)</text>
          </svg>
        </div>
      </section>
    </main>

    <footer class="status d-flex flex-shrink-0"><span>x = 1.000MHz</span><span>y = -77.154dB, -442.885°</span></footer>

    <section class="readout" aria-label="Cursor readout">
      <header class="d-flex align-items-center">
        <svg width="16" height="11"><use href="#ltlogo"/></svg>
        <h2 class="fw-normal">DADO-TT-triple(vbe-bd139)-e-cordell...</h2>
        <button class="shutbtn" aria-label="Close"><svg class="d-block mx-auto" width="14" height="11"><use href="#gx"/></svg></button>
      </header>
      <div class="pane">
        <fieldset>
          <legend>Cursor 1</legend>
          <p class="trace">-V(vout)/v(a)</p>
          <div class="duo">
            <label for="f1">Freq:</label><input type="text" id="f1" value="2.43835MHz"><label for="m1">Mag:</label><input type="text" class="sunk" id="m1" value="8.01156mdB"><input type="radio" name="c1" aria-label="Magnitude" checked>
            <label class="wide" for="p1">Phase:</label><input type="text" class="sunk" id="p1" value="-131.321°"><input type="radio" name="c1" aria-label="Phase">
            <label class="wide" for="g1">Group Delay:</label><input type="text" id="g1" value="8.55538ns"><input type="radio" name="c1" aria-label="Group delay" disabled>
          </div>
        </fieldset>
        <fieldset>
          <legend>Cursor 2</legend>
          <p class="trace">-V(vout)/v(a)</p>
          <div class="duo">
            <label for="f2">Freq:</label><input type="text" id="f2" value="6.17053MHz"><label for="m2">Mag:</label><input type="text" class="sunk" id="m2" value="-7.5445dB"><input type="radio" name="c2" aria-label="Magnitude" checked>
            <label class="wide" for="p2">Phase:</label><input type="text" class="sunk" id="p2" value="-181.834°"><input type="radio" name="c2" aria-label="Phase">
            <label class="wide" for="g2">Group Delay:</label><input type="text" id="g2" value="50.9139ns"><input type="radio" name="c2" aria-label="Group delay" disabled>
          </div>
        </fieldset>
        <fieldset class="quotient">
          <legend>Ratio (Cursor2 / Cursor1)</legend>
          <div class="duo">
            <label for="f3">Freq:</label><input type="text" id="f3" value="3.73218MHz"><label for="m3">Mag:</label><input type="text" id="m3" value="-7.55251dB"><span></span>
            <label class="wide" for="p3">Phase:</label><input type="text" id="p3" value="-50.513°"><span></span>
            <span class="wide"></span><input type="text" aria-label="Group delay ratio"><span></span>
          </div>
        </fieldset>
      </div>
    </section>
  </div>

  <div class="taskbar position-relative d-flex align-items-center flex-shrink-0">
    <div class="underglow"><i></i></div>
    <button class="tb startbtn" aria-label="Start"><svg viewBox="0 0 36 36"><defs><radialGradient id="orb" cx=".5" cy=".85" r=".8"><stop offset="0" stop-color="#4fd0f4"/><stop offset=".5" stop-color="#1c5f96"/><stop offset="1" stop-color="#8fb2c8"/></radialGradient></defs><circle cx="18" cy="18" r="17.500" fill="url(#orb)" stroke="#0d2f4d"/><path fill="#e8622a" d="M9 11Q13 8 17 10L15.500 17Q12 15 8 17.500Z"/><path fill="#8cc63c" d="M19 11Q23 13 28 10L26 17Q22 19 17.500 17.500Z"/><path fill="#48a4e4" d="M7.500 19Q11 17 15 19L13.500 26Q10 24 6 26Z"/><path fill="#fcc830" d="M17 20Q21 21 25.500 19L24 25Q20 28 15.500 26Z"/></svg></button>
    <button class="tb open" aria-label="Windows Explorer"><svg viewBox="0 0 36 36"><path fill="#f4e08c" stroke="#c8a848" d="M3 5H12L14 8H32V28H3Z"/><path fill="#fdf2b4" d="M5 10H33L32 29H3Z"/><path fill="#30a050" d="M6 4H12V7H6Z"/><path fill="#e06030" d="M14 6H19V9H14Z"/><path fill="#3080d0" d="M22 8H28V10H22Z"/><path fill="#9cd4f0" stroke="#5aa0cc" d="M7 21Q18 17 29 21V34H24V27H12V34H7Z"/></svg></button>
    <button class="tb" aria-label="Photos"><svg viewBox="0 0 36 36"><path fill="#f4f8fc" stroke="#aab" d="M4 5H14V17H4Z"/><path fill="#88b8e0" d="M6 7H14V15H6Z"/><path fill="#fff" stroke="#aaa" d="M14 3H34V21H14Z"/><path fill="#78b0e4" d="M16 5H32V19H16Z"/><path fill="#fff" stroke="#aaa" d="M8 15H24V29H8Z"/><path fill="#90bce0" d="M10 17H22V27H10Z"/><path fill="#d84808" d="M22 5L25 9 30 8 28 13 31 17 26 19 23 27 18 25 12 27 14 21 11 18 16 16 15 10 19 10Z"/><path fill="#f49030" d="M21 12L23 15 27 15 23 18 22 22 19 19 15 19 19 16Z"/><path fill="none" stroke="#f0b040" stroke-width="3" d="M4 24Q7 34 20 32"/></svg></button>
    <button class="tb" aria-label="Device tool"><svg viewBox="0 0 36 36"><g fill="#7c7c7c" stroke="#111"><path d="M12 0H21V5L20 20H13V5ZM20 20L33 19V29L20 28Z"/><circle cx="16" cy="24" r="9"/></g><circle cx="16" cy="24" r="2" fill="#bbb" stroke="#111"/></svg></button>
    <button class="tb" aria-label="Trend Micro"><svg viewBox="0 0 36 36"><ellipse cx="18" cy="18" rx="16" ry="17" fill="#e0201c"/><ellipse cx="16" cy="10" rx="12" ry="8" fill="#f46858"/><path fill="none" stroke="#fff" stroke-width="3" d="M6 13Q13 14 19 10Q10 26 17 26Q26 23 29 10"/></svg></button>
    <button class="tb" aria-label="Waveform viewer"><svg viewBox="0 0 36 36"><path fill="#000" stroke="#c8c8c8" d="M2.500 1.500H33.500V34.500H2.500Z"/><path stroke="#888" d="M10 2V34M18 2V34M26 2V34M3 10H33M3 18H33M3 26H33"/><path fill="none" stroke="#20d8d0" stroke-width="1.500" d="M3 18C6 5 13 4 18 18S30 32 33 18"/></svg></button>
    <button class="tb open" aria-label="Internet Explorer"><svg viewBox="0 0 36 36"><path fill="none" stroke="#38a8ec" stroke-width="6" d="M9 19H28Q28 8 18 8T8 19 18 30Q25 30 27 25"/><path fill="none" stroke="#f8c830" stroke-width="3" d="M6 32Q0 30 6 18T26 3Q35 1 30 10"/></svg></button>
    <button class="tb open" aria-label="Windows Live Mail"><svg viewBox="0 0 36 36"><path fill="#f09838" d="M9 3L31 6 29 22 7 20Z"/><path fill="#9ccc50" d="M12 6L33 9 31 24 10 22Z"/><path fill="#f4f8fc" stroke="#789" d="M4 11H29V28H4Z"/><path fill="none" stroke="#6aa0d0" stroke-width="2" d="M7 17H19M7 21H17"/><path fill="#5080c0" d="M22 13H27V18H22Z"/><path fill="none" stroke="#f0b848" stroke-width="4" d="M3 28Q13 36 20 30T33 28"/></svg></button>
    <button class="tb open" aria-label="Skype"><svg viewBox="0 0 36 36"><circle cx="12" cy="12" r="9.500" fill="#14a8e8"/><circle cx="24" cy="25" r="9.500" fill="#14a8e8"/><circle cx="18" cy="18" r="14" fill="#14a8e8"/><path fill="none" stroke="#fff" stroke-width="4" d="M24 13C22 8 12 8 12 13.500C12 19 24 16.500 24 22.500C24 28 13 28 12 22.500"/></svg></button>
    <button class="tb open" aria-label="Adobe Reader"><svg viewBox="0 0 36 36"><path fill="#b80c10" stroke="#700" d="M3 2H33V34H3Z"/><path fill="none" stroke="#fff" stroke-width="2" d="M8 27Q15 22 18 9 19 5 17 7 16 14 28 22 30 24 26 23 17 21 9 27Z"/></svg></button>
    <button class="tb open cur" aria-label="LTspice IV"><svg viewBox="0 0 36 36"><path fill="#8c1014" d="M10 3H35L32 7H30L24 25H17L23 8H18L12 24H14L12 30H1L3 25H5L11 8H9Z"/><path fill="#fff" stroke="#555" d="M20 20L27 17 34 20V26Q33 32 27 35 21 32 20 26Z"/><path fill="#2880d0" d="M21 21L27 19V26H21ZM27 26H33Q32 31 27 33Z"/><path fill="#f8cc30" d="M27 19L33 21V26H27ZM21 26H27V33Q22 31 21 26Z"/></svg></button>
    <div class="tray ms-auto d-flex align-items-center">
      <span class="me-1">HR</span>
      <svg width="9" height="5"><path fill="#fff" d="M4.500 0L9 5H0Z"/></svg>
      <svg width="16" height="16" class="ms-1"><path fill="#c8cccc" d="M0 0H16V16H0Z"/><path fill="none" stroke="#fff" stroke-width="2.500" d="M5 4Q2 8 5 11T11 11 11 4L8 3"/></svg>
      <svg width="16" height="16" fill="none" stroke="#fff"><path stroke-width="1.500" d="M6 3.500H15V11.500H6Z"/><path d="M8 14.500H13M10.500 12V14M1 1V4H5V1M3 4V12L6 14.500"/></svg>
      <svg width="16" height="16" fill="none" stroke="#fff"><path fill="#fff" d="M1 5.500H3L7 2V14L3 10.500H1Z"/><path d="M9.500 5.500Q11.500 8 9.500 10.500M11.500 3.500Q14.500 8 11.500 12.500M13 2Q17 8 13 14"/></svg>
      <div class="clock ms-2"><div>8:54</div><div>19.4.2013.</div></div>
      <div class="peek ms-0"></div>
    </div>
  </div>
</div>
<script src="https://cdn.jsdelivr.net/npm/bootstrap@5.3.0/dist/js/bootstrap.bundle.min.js"></script>
</body>
</html>
